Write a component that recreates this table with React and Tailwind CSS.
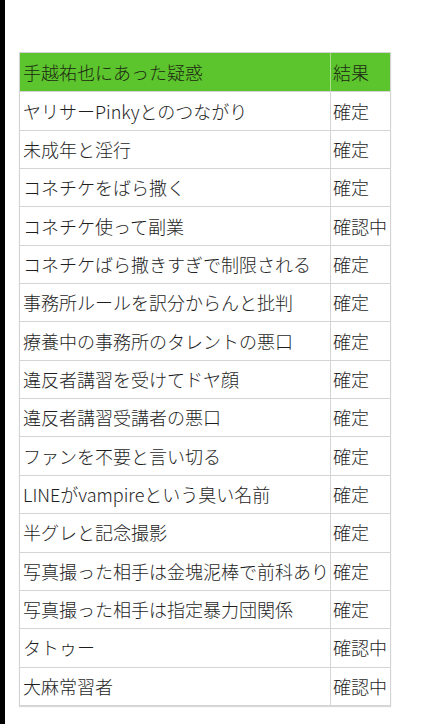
const rows = [
  ["ヤリサーPinkyとのつながり", "確定"],
  ["未成年と淫行", "確定"],
  ["コネチケをばら撒く", "確定"],
  ["コネチケ使って副業", "確認中"],
  ["コネチケばら撒きすぎで制限される", "確定"],
  ["事務所ルールを訳分からんと批判", "確定"],
  ["療養中の事務所のタレントの悪口", "確定"],
  ["違反者講習を受けてドヤ顔", "確定"],
  ["違反者講習受講者の悪口", "確定"],
  ["ファンを不要と言い切る", "確定"],
  ["LINEがvampireという臭い名前", "確定"],
  ["半グレと記念撮影", "確定"],
  ["写真撮った相手は金塊泥棒で前科あり", "確定"],
  ["写真撮った相手は指定暴力団関係", "確定"],
  ["タトゥー", "確認中"],
  ["大麻常習者", "確認中"],
];

export default function App() {
  return (
    <div
      className="flex h-[724px] w-[428px] bg-white"
      style={{ fontFamily: '"Noto Sans CJK JP", "Noto Sans", sans-serif' }}
    >
      {/* dark strip on the left edge */}
      <div className="w-[5px] shrink-0 bg-black" />

      <div className="pl-[14px] pt-[52px]">
        <div className="w-[372px] border border-[#d4d4d4] shadow-[0_1px_1px_rgba(0,0,0,0.15)]">
          {/* header */}
          <div className="flex h-[38.4px] bg-[#5cc42c] text-[18px] font-light text-[#1c2a14]">
            <div className="flex w-[311px] items-center border-r border-[#a9dc8c] pl-[3px]">
              手越祐也にあった疑惑
            </div>
            <div className="flex flex-1 items-center pl-[2px]">結果</div>
          </div>

          {rows.map(([text, result]) => (
            <div
              key={text}
              className="flex h-[38.35px] border-t border-[#d4d4d4] text-[18px] font-light text-[#1e1e1e]"
            >
              <div className="flex w-[311px] items-center border-r border-[#d4d4d4] pl-[3px] whitespace-nowrap">
                {text}
              </div>
              <div className="flex flex-1 items-center pl-[2px] whitespace-nowrap">
                {result}
              </div>
            </div>
          ))}
        </div>
      </div>
    </div>
  );
}
